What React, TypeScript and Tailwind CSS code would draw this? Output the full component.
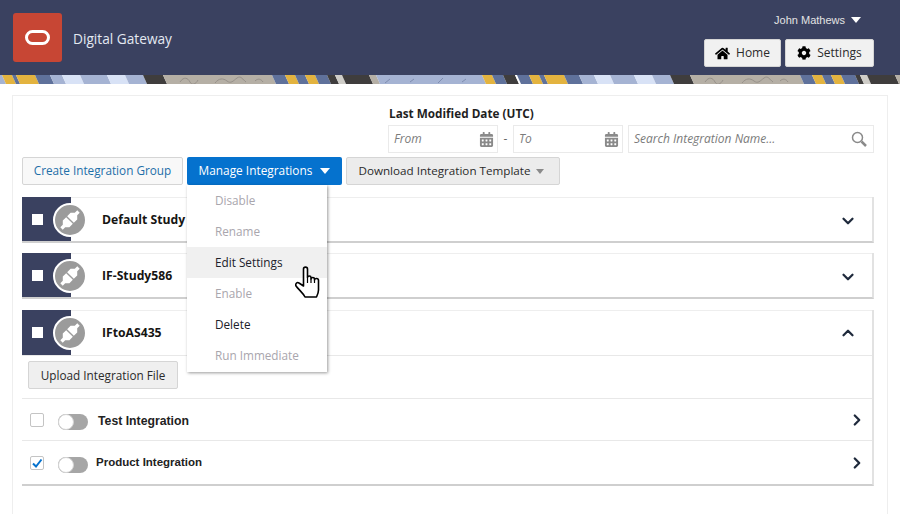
import { ChevronDown, ChevronRight, ChevronUp } from "lucide-react";
import { FaCalendarAlt, FaCog, FaHome } from "react-icons/fa";

const DARK = "#3f3d3d";
const TAUPE = "#b5afa5";
const BLUE = "#5f719b";
const YELLOW = "#e3b33f";
const PERI = "#a5b3d3";
const PALE = "#d8e2f6";
const GREY = "#cfcdc8";

const bands: [number, number, string][] = [
  [-4, 2, PERI], [2, 12, YELLOW], [12, 16, BLUE], [16, 35, YELLOW], [35, 50, BLUE],
  [50, 62, PERI], [62, 80, PALE], [80, 107, PERI], [107, 125, PALE], [125, 143, PERI],
  [143, 163, DARK], [163, 272, TAUPE], [272, 285, BLUE], [285, 295, YELLOW], [295, 305, BLUE],
  [305, 315, YELLOW], [315, 327, BLUE], [327, 335, DARK], [335, 342, GREY], [342, 369, DARK],
  [369, 376, TAUPE], [376, 482, PERI], [482, 492, YELLOW], [492, 503, BLUE], [503, 515, DARK],
  [515, 517, "#ffffff"], [517, 529, BLUE], [529, 539, YELLOW], [539, 544, BLUE], [544, 564, YELLOW],
  [564, 579, BLUE], [579, 594, PERI], [594, 610, PALE], [610, 634, PERI], [634, 652, PALE],
  [652, 670, PERI], [670, 690, DARK], [690, 800, TAUPE], [800, 812, BLUE], [812, 822, YELLOW],
  [822, 831, BLUE], [831, 841, YELLOW], [841, 855, BLUE], [855, 860, DARK], [860, 867, GREY],
  [867, 895, DARK], [895, 904, TAUPE],
];

function Caret() {
  return <span className="inline-block w-0 h-0 border-x-[5px] border-x-transparent border-t-[6px] border-t-white" />;
}

function Banner() {
  return (
    <svg width="900" height="9" viewBox="0 0 900 9" className="block w-full h-[9px]">
      {bands.map((b, i) => (
        <polygon key={i} points={`${b[0]},0 ${b[1]},0 ${b[1] + 4},9 ${b[0] + 4},9`} fill={b[2]} />
      ))}
      <g fill="none" stroke="#97918a" strokeWidth="1">
        <path d="M180 7c4-6 8-4 10 0s6 2 8-2M215 8c4-5 8-5 12-2s6 0 10-3 6 2 9 4M255 6c3-3 6-2 8 1" />
        <path d="M705 7c4-6 8-4 10 0s6 2 8-2M742 8c4-5 8-5 12-2s6 0 10-3 6 2 9 4M780 6c3-3 6-2 8 1" />
      </g>
      <g fill="none" stroke="#7f8db0" strokeWidth="1">
        <path d="M385 8l5-4M410 7l4-3M438 8l5-5M462 7l4-3" />
      </g>
    </svg>
  );
}

function PlugIcon() {
  return (
    <span className="absolute left-[31px] top-[6px] w-[34px] h-[34px] rounded-full bg-[#9b9b9b] border-2 border-white flex items-center justify-center">
      <svg width="28" height="28" viewBox="0 0 28 28" className="shrink-0">
        <g transform="rotate(45 14 14)" fill="#fff">
          <path d="M12.300 2h3.400v3.500l3 3v4.800h-9.400V8.500l3-3z" />
          <path d="M9.300 14.700h9.400v4.800l-3 3V26h-3.400v-3.500l-3-3z" />
        </g>
      </svg>
    </span>
  );
}

function GroupHead({ name, open }: { name: string; open?: boolean }) {
  return (
    <div className={`flex ${open ? "h-[45px]" : "h-[44px]"}`}>
      <div className="relative w-[49px] bg-[#3a4160] flex items-center pl-[10px] shrink-0">
        <span className="w-[11px] h-[11px] bg-white" />
        <PlugIcon />
      </div>
      <div className={`flex-1 flex items-center border-t border-[#eeeeee] ${open ? "" : "pt-[2px]"}`}>
        <span className="ml-[31px] text-[12.200px] font-bold text-[#161513]">{name}</span>
        <span className="ml-auto mr-[15px] text-[#1f2a3c]">
          {open ? <ChevronUp size={18} strokeWidth={3} /> : <ChevronDown size={18} strokeWidth={3} />}
        </span>
      </div>
    </div>
  );
}

function Toggle() {
  return (
    <span className="block w-[30px] h-[16px] rounded-full bg-[#a6a6a6] relative shrink-0 ml-[14px] mt-[4px]">
      <span className="absolute left-0 top-0 w-[16px] h-[16px] rounded-full bg-white border border-[#d4d4d4]" />
    </span>
  );
}

function HandCursor() {
  return (
    <svg width="25" height="33" viewBox="0 0 25 33" className="absolute left-[108px] top-[81px]" fill="#fff" stroke="#000" strokeWidth="1.6" strokeLinejoin="round">
      <path d="M8.500 20V3C8.500.5 12.500.5 12.500 3v8.500c0-2 3.500-2 3.500 0V13c0-2 3.500-2 3.500 0v1c0-2 4-2 4 .5V24c0 3-1 5-2 7H10c-2-4-6-7-9-11-1-2 1-4.500 3-3l4.500 3z" />
      <path d="M12.500 11.500V17M16 13v4M19.500 14v3" fill="none" strokeWidth="1.200" />
    </svg>
  );
}

const menuItems = [
  { label: "Disable", disabled: true },
  { label: "Rename", disabled: true },
  { label: "Edit Settings", active: true },
  { label: "Enable", disabled: true },
  { label: "Delete" },
  { label: "Run Immediate", disabled: true },
];

function DateInput({ label }: { label: string }) {
  return (
    <div className="w-[110px] h-[28px] border border-[#eaeaea] flex items-center pl-[5px] pr-[3px] justify-between">
      <span className="text-[12px] italic text-[#7b7b7b]">{label}</span>
      <FaCalendarAlt className="text-[#8a8a8a] text-[15px]" />
    </div>
  );
}

const sectionClass = "border-b-2 border-b-[#cfcfcf] border-r-2 border-r-[#e2e2e2]";

export default function App() {
  return (
    <div className="w-[900px] h-[514px] overflow-hidden bg-white relative" style={{ fontFamily: "'Open Sans', sans-serif" }}>
      <header className="h-[75px] bg-[#3a4160] flex justify-between">
        <div className="flex items-center pl-[13px] pb-[1px]">
          <div className="w-[49px] h-[49px] rounded-[3px] bg-[#c74634] flex items-center justify-center">
            <span className="w-[25px] h-[15px] rounded-[7.5px] border-[3px] border-white" />
          </div>
          <span className="ml-[11px] mt-[4px] text-[13.700px] text-[#e4e9f2]">Digital Gateway</span>
        </div>
        <div className="flex flex-col items-end pr-[26px] pt-[13px]">
          <div className="flex items-center gap-[6px] pr-[13px] h-[14px] text-[11px] text-[#e3e3e3]" style={{ fontFamily: "'Liberation Sans', sans-serif" }}>
            John Mathews <Caret />
          </div>
          <div className="flex gap-[4px] mt-[12px]">
            <button className="w-[77px] h-[28px] bg-[#f1f1f1] border border-[#d5d5d5] rounded-[2px] flex items-center justify-center gap-[6px] text-[12px] text-[#2a2a2a]">
              <FaHome className="text-[15px] text-black" /> Home
            </button>
            <button className="w-[89px] h-[28px] bg-[#f1f1f1] border border-[#d5d5d5] rounded-[2px] flex items-center justify-center gap-[6px] text-[12px] text-[#2a2a2a]">
              <FaCog className="text-[14px] text-black" /> Settings
            </button>
          </div>
        </div>
      </header>
      <Banner />

      <main className="mx-[12px] mt-[11px] border border-[#eeeeee] h-[440px] pl-[9px] pr-[13px] pt-[10px]">
        <div className="flex justify-end">
          <div>
            <div className="text-[11.750px] font-bold text-[#1f1f1f] h-[19px] leading-[14px] pl-[1px]">Last Modified Date (UTC)</div>
            <div className="flex items-center">
              <DateInput label="From" />
              <span className="w-[15px] text-center text-[12px] text-[#666]">-</span>
              <DateInput label="To" />
              <div className="ml-[5px] w-[246px] h-[28px] border border-[#eaeaea] flex items-center justify-between px-[5px] pr-[6px]">
                <span className="text-[12px] italic text-[#7b7b7b]">Search Integration Name...</span>
                <svg width="16" height="16" viewBox="0 0 16 16" fill="none" stroke="#8a8a8a">
                  <circle cx="6.500" cy="6.500" r="5" strokeWidth="1.500" />
                  <path d="M10.500 10.500 15 15" strokeWidth="2.500" />
                </svg>
              </div>
            </div>
          </div>
        </div>

        <div className="flex mt-[4px] gap-[4px]">
          <button className="w-[161px] h-[28px] bg-[#f8f8f8] border border-[#d5d5d5] rounded-[2px] text-[11.750px] text-[#1e6fa8]">Create Integration Group</button>
          <div className="relative">
            <button className="w-[155px] h-[28px] bg-[#0572ce] rounded-[2px] flex items-center justify-center gap-[8px] text-[11.850px] text-white">
              Manage Integrations <Caret />
            </button>
            <div className="absolute z-20 left-0 top-[28px] w-[140px] h-[187px] bg-white shadow-[1px_1px_3px_rgba(0,0,0,0.4)]">
              {menuItems.map((m) => (
                <div
                  key={m.label}
                  className={`h-[31px] pt-[1px] flex items-center pl-[28px] text-[11.750px] ${m.disabled ? "text-[#a9a6ad]" : "text-[#20202a]"} ${m.active ? "bg-[#f0f0f0]" : ""}`}
                >
                  {m.label}
                </div>
              ))}
              <HandCursor />
            </div>
          </div>
          <button className="w-[214px] h-[28px] pr-[3px] bg-[#ececec] border border-[#d5d5d5] rounded-[2px] flex items-center justify-center gap-[6px] text-[11.650px] text-[#2a2a2a]">
            Download Integration Template
            <span className="inline-block w-0 h-0 border-x-[4.500px] border-x-transparent border-t-[5px] border-t-[#8a8a8a]" />
          </button>
        </div>

        <div className="mt-[12px] flex flex-col gap-[10px]">
          <section className={sectionClass}>
            <GroupHead name="Default Study Group" />
          </section>
          <section className={sectionClass}>
            <GroupHead name="IF-Study586" />
          </section>
          <section className={`${sectionClass} mt-[1px]`}>
            <GroupHead name="IFtoAS435" open />
            <div className="h-[43px] border-t border-[#e8e8e8] pl-[6px] pt-[5px]">
              <button className="w-[150px] h-[28px] pt-[1px] bg-[#efefef] border border-[#d5d5d5] rounded-[2px] text-[11.750px] text-[#2a2a2a]">Upload Integration File</button>
            </div>
            <div className="h-[42px] border-t border-[#e8e8e8] flex items-center pl-[8px]">
              <span className="w-[14px] h-[14px] border border-[#c4c4c4] rounded-[2px]" />
              <Toggle />
              <span className="ml-[10px] mt-[4px] text-[12.250px] font-bold text-[#222]" style={{ fontFamily: "'Liberation Sans', sans-serif" }}>Test Integration</span>
              <ChevronRight size={18} strokeWidth={3} className="ml-auto mr-[6px] text-[#1f2a3c]" />
            </div>
            <div className="h-[44px] border-t border-[#e8e8e8] flex items-center pl-[8px]">
              <span className="w-[14px] h-[14px] border border-[#c4c4c4] rounded-[2px] flex items-center justify-center text-[#0572ce]">
                <svg width="12" height="12" viewBox="0 0 12 12" fill="none" stroke="currentColor" strokeWidth="2"><path d="M2 6.500 5 9.500 10.500 2.500" /></svg>
              </span>
              <Toggle />
              <span className="ml-[8px] text-[11.500px] font-bold text-[#222]" style={{ fontFamily: "'Liberation Sans', sans-serif" }}>Product Integration</span>
              <ChevronRight size={18} strokeWidth={3} className="ml-auto mr-[6px] text-[#1f2a3c]" />
            </div>
          </section>
        </div>
      </main>
    </div>
  );
}
